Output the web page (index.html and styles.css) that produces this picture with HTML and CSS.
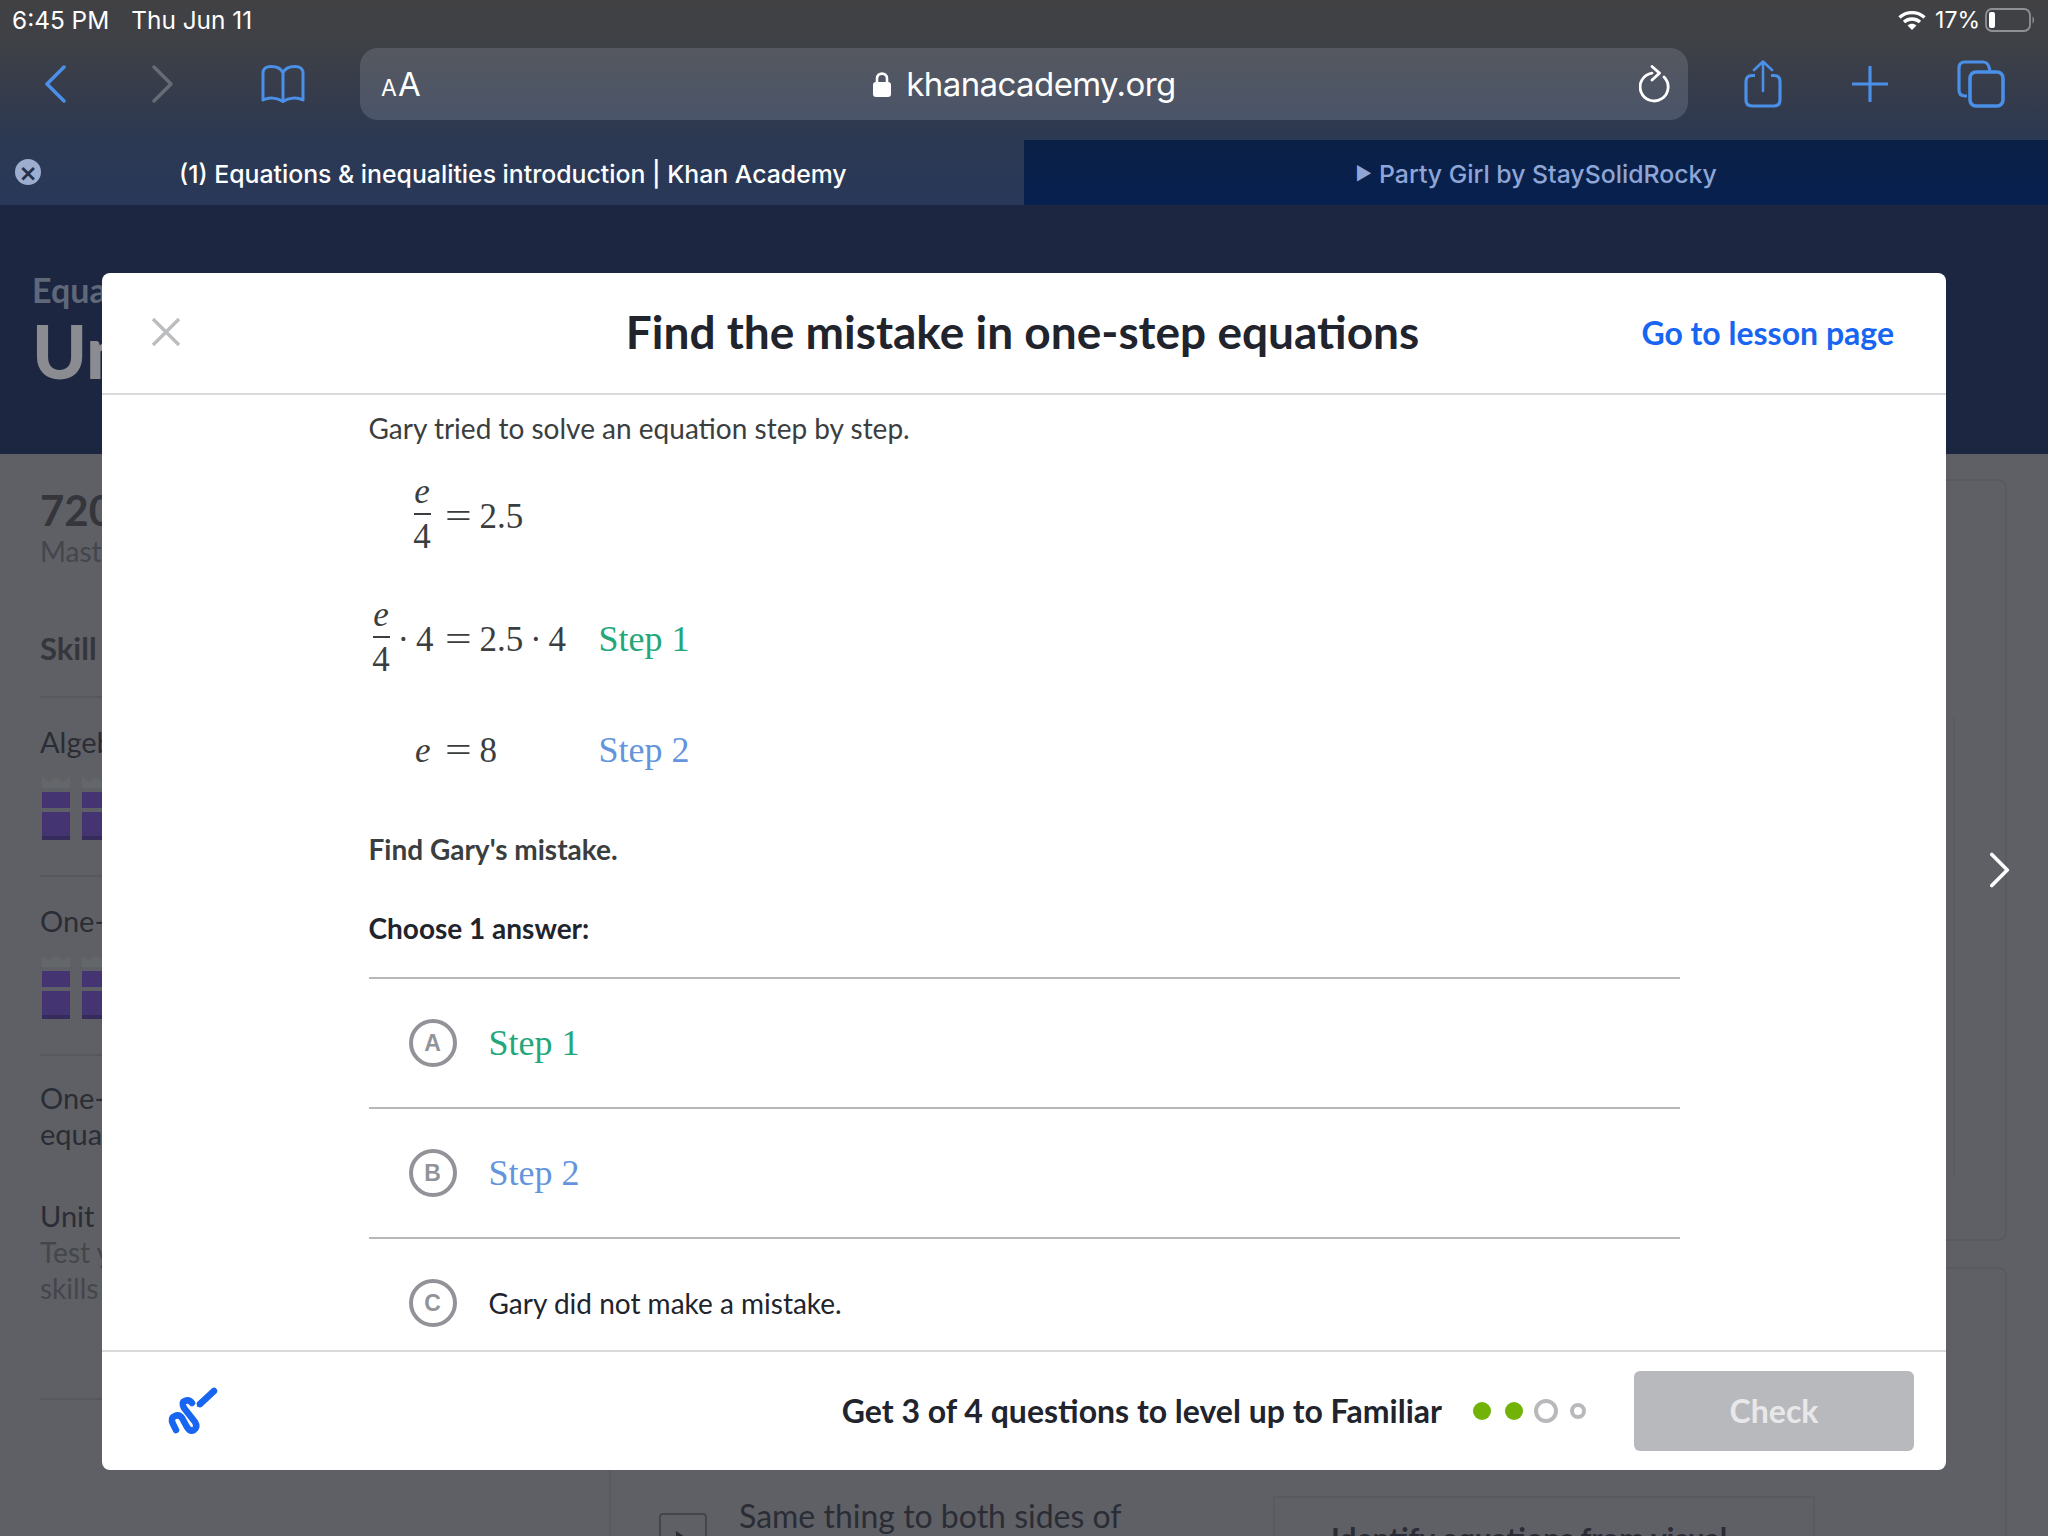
FILE: index.html
```html
<!DOCTYPE html>
<html lang="en">
<head>
<meta charset="utf-8">
<title>Find the mistake in one-step equations</title>
<link rel="stylesheet" href="styles.css">
</head>
<body>
<div class="screen">
  <header class="chrome">
    <div class="status">
      <div class="status-left"><span>6:45 PM</span><span>Thu Jun 11</span></div>
      <div class="status-right">
        <svg class="wifi" viewBox="0 0 28 20"><path d="M1.5 7.5C8.5 1 19.500 1 26.500 7.500" fill="none" stroke="#fff" stroke-width="3.400"/><path d="M6 12C10.500 8 17.500 8 22 12" fill="none" stroke="#fff" stroke-width="3.400"/><path d="M14 20L9.500 15.500C12 13.300 16 13.300 18.500 15.500Z" fill="#fff"/></svg>
        <span class="pct">17%</span>
        <svg class="battery" viewBox="0 0 50 24"><rect x="1" y="1" width="44" height="22" rx="6" fill="none" stroke="#8f9094" stroke-width="1.800"/><rect x="4" y="4" width="6" height="16" rx="2" fill="#fff"/><path d="M47.500 8.500C49.500 9.500 49.500 14.500 47.500 15.500Z" fill="#8f9094"/></svg>
      </div>
    </div>
    <div class="toolbar">
      <svg class="ic-back" viewBox="0 0 22 38"><path d="M20 2L3 19L20 36" fill="none" stroke="#4a8fe8" stroke-width="3.500" stroke-linecap="round" stroke-linejoin="round"/></svg>
      <svg class="ic-forward" viewBox="0 0 22 38"><path d="M2 2L19 19L2 36" fill="none" stroke="#666b75" stroke-width="3.500" stroke-linecap="round" stroke-linejoin="round"/></svg>
      <svg class="ic-book" viewBox="0 0 44 38"><path d="M22 8C20 3 15 1.500 10 1.500C5 1.500 2 4 2 8V35C8 32 16 32.500 22 36.500C28 32.500 36 32 42 35V8C42 4 39 1.500 34 1.500C29 1.500 24 3 22 8ZM22 8V36" fill="none" stroke="#4a8fe8" stroke-width="3" stroke-linejoin="round"/></svg>
      <div class="address">
        <div class="aa"><span class="aa-small">A</span><span class="aa-big">A</span></div>
        <div class="url">
          <svg class="lock" viewBox="0 0 20 26"><path d="M5 12V7.500C5 1 15 1 15 7.500V12" fill="none" stroke="#fff" stroke-width="2.600"/><rect x="1" y="11" width="18" height="15" rx="3" fill="#fff"/></svg>
          <span>khanacademy.org</span>
        </div>
        <svg class="reload" viewBox="0 0 31 38"><path d="M13 8.100A14 14 0 1 0 25 12" fill="none" stroke="#fff" stroke-width="2.800" stroke-linecap="round"/><path d="M13 1.500L20.500 8.100L13 15" fill="none" stroke="#fff" stroke-width="2.800" stroke-linecap="round" stroke-linejoin="round"/></svg>
      </div>
      <svg class="ic-share" viewBox="0 0 38 48"><path d="M11 15.500H8C4 15.500 2 17.500 2 21.500V40C2 44 4 46 8 46H30C34 46 36 44 36 40V21.500C36 17.500 34 15.500 30 15.500H27" fill="none" stroke="#4a8fe8" stroke-width="3.200"/><path d="M19 31V1.500M10 10L19 1.500L28 10" fill="none" stroke="#4a8fe8" stroke-width="2.600" stroke-linecap="round" stroke-linejoin="round"/></svg>
      <svg class="ic-plus" viewBox="0 0 36 36"><path d="M18 1V35M1 18H35" fill="none" stroke="#4a8fe8" stroke-width="3.200" stroke-linecap="round"/></svg>
      <svg class="ic-tabs" viewBox="0 0 48 48"><path d="M10 36H8C4 36 2 34 2 30V8C2 4 4 2 8 2H26C30 2 32 4 33 11" fill="none" stroke="#4a8fe8" stroke-width="3.200"/><rect x="13" y="12" width="33" height="34" rx="6" fill="none" stroke="#4a8fe8" stroke-width="3.600"/></svg>
    </div>
    <div class="tabs">
      <div class="tab tab-active">
        <span class="tab-close">×</span>
        <span class="tab-title">(1) Equations &amp; inequalities introduction | Khan Academy</span>
      </div>
      <div class="tab tab-other"><span class="tab-play">▶</span><span>Party Girl by StaySolidRocky</span></div>
    </div>
  </header>

  <div class="hero">
    <div class="crumb">Equations</div>
    <div class="hero-title">Unit</div>
  </div>

  <div class="content">
    <aside class="side">
      <div class="points">720</div>
      <div class="muted">Mastery</div>
      <div class="skill-head">Skill summary</div>
      <div class="skill">
        <div class="skill-name">Algebra</div>
        <div class="bars">
          <div class="bar"><i class="crown"></i><i class="seg1"></i><i class="seg2"></i></div>
          <div class="bar"><i class="crown"></i><i class="seg1"></i><i class="seg2"></i></div>
        </div>
      </div>
      <div class="skill">
        <div class="skill-name">One-step</div>
        <div class="bars">
          <div class="bar"><i class="crown"></i><i class="seg1"></i><i class="seg2"></i></div>
          <div class="bar"><i class="crown"></i><i class="seg1"></i><i class="seg2"></i></div>
        </div>
      </div>
      <div class="skill-last">
        <div class="skill-name">One-step<br>equations</div>
      </div>
      <div class="unit">
        <div class="skill-name">Unit test</div>
        <div class="muted">Test your<br>skills</div>
      </div>
    </aside>
    <main class="main">
      <section class="card card-top"><div class="inner-top"></div></section>
      <section class="card card-bottom">
        <div class="lesson">
          <span class="play-box"><svg viewBox="0 0 20 24"><path d="M3 2L18 12L3 22Z" fill="#2b2e36"/></svg></span>
          <span>Same thing to both sides of</span>
        </div>
        <div class="panel"><b>Identify equations from visual</b></div>
      </section>
    </main>
  </div>

  <svg class="next" viewBox="0 0 22 38"><path d="M2 2L19 19L2 36" fill="none" stroke="#fff" stroke-width="4" stroke-linecap="round" stroke-linejoin="round"/></svg>

  <div class="modal">
    <div class="modal-head">
      <svg class="close" viewBox="0 0 30 30"><path d="M2 2L28 28M28 2L2 28" fill="none" stroke="#bcbdbf" stroke-width="3.400"/></svg>
      <h1>Find the mistake in one-step equations</h1>
      <a class="lesson-link">Go to lesson page</a>
    </div>
    <div class="modal-body">
      <div class="question">
        <p class="intro">Gary tried to solve an equation step by step.</p>
        <div class="eqs">
          <div class="lhs"><span class="frac"><i>e</i><span>4</span></span></div>
          <div class="rhs"><span class="eq-sign">=</span>2.5</div>
          <div></div>
          <div class="lhs"><span class="frac"><i>e</i><span>4</span></span><span class="dot-four">· 4</span></div>
          <div class="rhs"><span class="eq-sign">=</span>2.5 · 4</div>
          <div class="step green">Step 1</div>
          <div class="lhs"><i>e</i></div>
          <div class="rhs"><span class="eq-sign">=</span>8</div>
          <div class="step blue">Step 2</div>
        </div>
        <p class="find">Find Gary's mistake.</p>
        <p class="choose">Choose 1 answer:</p>
        <div class="choice"><span class="letter">A</span><span class="step green">Step 1</span></div>
        <div class="choice"><span class="letter">B</span><span class="step blue">Step 2</span></div>
        <div class="choice"><span class="letter">C</span><span class="plain">Gary did not make a mistake.</span></div>
      </div>
    </div>
    <div class="modal-foot">
      <svg class="scratch" viewBox="160 1380 70 65"><path d="M176 1430L173 1424Q170 1418 175 1416Q179 1414 182 1418L187 1427Q190 1432 194 1430Q198 1427 195 1422L184 1408Q181 1402 185 1401Q189 1399 192 1403" fill="none" stroke="#1865f2" stroke-width="6.500" stroke-linecap="round"/><path d="M200 1404L214 1391" fill="none" stroke="#1865f2" stroke-width="6.500" stroke-linecap="round"/><path d="M197 1407L198 1401L203 1406Z" fill="#1865f2"/></svg>
      <div class="goal">Get 3 of 4 questions to level up to Familiar</div>
      <div class="dots"><i class="d-green"></i><i class="d-green"></i><i class="d-ring"></i><i class="d-small"></i></div>
      <button class="check">Check</button>
    </div>
  </div>
</div>
</body>
</html>
```
FILE: styles.css
```css
* { box-sizing: border-box; }
html, body { margin: 0; padding: 0; }
body { width: 2048px; height: 1536px; overflow: hidden; background: #5f6065; font-family: "Lato", sans-serif; }
.screen { position: relative; width: 2048px; height: 1536px; overflow: hidden; display: flex; flex-direction: column; }

/* browser chrome */
.chrome { height: 205px; flex: none; background: linear-gradient(180deg, #414144 0, #3f4146 40px, #343b4c 100px, #2b3953 140px, #293859 205px); color: #fff; font-family: "Inter", "Liberation Sans", sans-serif; }
.status { height: 40px; display: flex; justify-content: space-between; align-items: center; padding: 0 13px 0 12px; font-size: 24.400px; }
.status-left { display: flex; gap: 22px; }
.status-right { display: flex; align-items: center; }
.wifi { width: 28px; height: 20px; }
.pct { margin-left: 9px; font-size: 23px; }
.battery { width: 50px; height: 24px; margin-left: 5px; }
.toolbar { height: 88px; padding: 0 0 0 44px; display: flex; align-items: center; }
.ic-back, .ic-forward { width: 22px; height: 38px; flex: none; }
.ic-forward { margin-left: 86px; }
.ic-book { width: 44px; height: 38px; margin-left: 87px; flex: none; }
.address { width: 1328px; height: 72px; margin-left: 55px; flex: none; border-radius: 18px; background: linear-gradient(180deg, #55585f, #4a5469); display: grid; grid-template-columns: 1fr auto 1fr; align-items: center; padding: 0 18px 0 21px; }
.aa { display: flex; align-items: baseline; }
.aa-small { font-size: 23px; }
.aa-big { font-size: 33px; margin-left: 1px; }
.url { display: flex; align-items: center; gap: 14px; margin-left: -3px; font-size: 33px; letter-spacing: -0.600px; }
.lock { width: 20px; height: 26px; }
.reload { width: 31px; height: 38px; justify-self: end; }
.ic-share { width: 38px; height: 48px; margin-left: 56px; flex: none; }
.ic-plus { width: 36px; height: 36px; margin-left: 70px; flex: none; }
.ic-tabs { width: 48px; height: 48px; margin-left: 69px; flex: none; }
.tabs { height: 65px; margin-top: 12px; display: flex; font-size: 24.800px; font-weight: 500; }
.tab { width: 1024px; display: flex; align-items: center; padding-top: 2px; }
.tab-active { padding-left: 15px; }
.tab-close { width: 26px; height: 26px; margin-top: -3px; border-radius: 50%; background: #9dadd0; color: #233048; display: flex; align-items: center; justify-content: center; font-size: 28px; line-height: 1; }
.tab-title { margin-left: 138px; }
.tab-other { justify-content: center; background: linear-gradient(180deg, #0b2046, #06204f); color: #8ea5d6; gap: 7px; }
.tab-play { font-size: 18px; }

/* page behind the dialog */
.hero { height: 249px; flex: none; background: #1c2640; color: #5f6879; padding: 67px 0 0 32px; }
.crumb { font-size: 34px; font-weight: 700; line-height: 36px; }
.hero-title { font-size: 74px; font-weight: 900; line-height: 80px; color: #8a8c92; margin-top: 3px; }
.content { flex: 1; display: flex; min-height: 0; }
.side { width: 609px; flex: none; padding: 34px 0 0 40px; color: #2a2d35; }
.points { font-size: 42px; font-weight: 700; line-height: 44px; color: #34363c; }
.muted { font-size: 28px; line-height: 36px; color: #44464c; }
.side > .muted { padding-top: 1px; margin-bottom: -1px; }
.skill-head { font-size: 31px; font-weight: 700; line-height: 40px; margin-top: 60px; padding-bottom: 28px; border-bottom: 2px solid #56585d; color: #34363c; white-space: nowrap; }
.skill { height: 179px; padding-top: 26px; border-bottom: 2px solid #56585d; }
.skill-name { font-size: 29px; line-height: 36px; }
.bars { display: flex; gap: 12px; margin-top: 17px; padding-left: 2px; }
.bar { width: 28px; display: flex; flex-direction: column; }
.bar i { display: block; }
.crown { height: 11px; margin-bottom: 4px; background: #64676a; clip-path: polygon(0 0, 25% 45%, 50% 0, 75% 45%, 100% 0, 100% 100%, 0 100%); }
.seg1 { height: 16px; background: #453472; }
.seg2 { height: 28px; margin-top: 4px; background: #453472; border-bottom: 4px solid #352c5c; }
.skill-last { padding-top: 24px; height: 140px; }
.unit { height: 202px; margin-top: 2px; border-bottom: 2px solid #56585d; }
.main { flex: 1; padding: 25px 41px 0 0; display: flex; flex-direction: column; gap: 26px; min-width: 0; }
.card { border: 2px solid #585a5f; border-radius: 8px; }
.card-top { height: 762px; flex: none; display: flex; justify-content: flex-end; padding: 236px 50px 0 0; }
.inner-top { width: 400px; height: 460px; border-right: 2px solid #595c60; }
.card-bottom { flex: 1; display: flex; padding: 227px 190px 0 48px; justify-content: space-between; align-items: flex-start; }
.lesson { display: flex; gap: 32px; font-size: 32px; line-height: 40px; color: #2a2d35; }
.play-box { width: 48px; height: 60px; border: 2px solid #44464c; border-radius: 4px; padding: 14px 12px 0; margin-top: 17px; flex: none; }
.play-box svg { width: 20px; height: 24px; display: block; }
.panel { width: 542px; height: 80px; border: 2px solid #585a5f; border-bottom: 0; padding: 22px 0 0 56px; font-size: 30px; color: #2a2d35; white-space: nowrap; }
.next { position: absolute; left: 1990px; top: 852px; width: 20px; height: 36px; }

/* dialog */
.modal { position: absolute; left: 102px; top: 273px; width: 1844px; height: 1197px; background: #fff; border-radius: 8px; display: flex; flex-direction: column; overflow: hidden; }
.modal-head { height: 122px; flex: none; border-bottom: 2px solid #d9d9db; display: grid; grid-template-columns: 1fr auto 1fr; align-items: center; padding: 0 52px 2px 49px; }
.close { width: 30px; height: 30px; }
h1 { margin: 0; font-size: 46px; font-weight: 700; color: #21242c; line-height: 1.2; }
.lesson-link { justify-self: end; font-size: 32px; font-weight: 700; color: #1865f2; }
.modal-body { flex: 1; min-height: 0; overflow: hidden; }
.question { width: 1311px; margin: 0 auto; padding-top: 13px; color: #3b3e40; font-size: 28px; line-height: 40px; }
.question p { margin: 0; }
.eqs { display: grid; grid-template-columns: 64px 166px 1fr; grid-template-rows: 100px 104px 76px; row-gap: 21px; align-items: center; margin-top: 19px; font-family: "Liberation Serif", serif; font-size: 35px; }
.eqs .step { margin-top: -2px; }
.lhs { display: flex; align-items: center; justify-content: flex-end; padding-right: 2px; white-space: nowrap; }
.eqs > .rhs { padding-left: 12px; white-space: nowrap; word-spacing: -2px; }
.eq-sign { display: inline-block; width: 35px; transform: scaleX(1.35); transform-origin: left center; }
.frac { display: inline-flex; flex-direction: column; align-items: center; width: 17px; }
.frac i { border-bottom: 2px solid #3b3e40; width: 100%; text-align: center; padding-bottom: 4px; line-height: 34px; }
.frac span { line-height: 44px; }
.dot-four { margin-left: 8px; margin-right: -3px; word-spacing: -2px; }
.step { font-family: "Liberation Serif", serif; font-size: 36px; }
.green { color: #23a77a; }
.blue { color: #6495dc; }
.find { margin-top: 40px !important; font-weight: 700; }
.choose { margin-top: 39px !important; font-weight: 700; color: #21242c; padding-bottom: 29px; border-bottom: 2px solid #b8b8ba; }
.choice { height: 130px; flex: none; display: flex; align-items: center; gap: 32px; padding-left: 40px; border-bottom: 2px solid #b8b8ba; }
.letter { width: 48px; height: 48px; border: 4px solid #929399; border-radius: 50%; display: flex; align-items: center; justify-content: center; font-family: "Liberation Sans", sans-serif; font-weight: 700; font-size: 23px; color: #929399; flex: none; }
.plain { color: #21242c; }
.modal-foot { height: 120px; flex: none; border-top: 2px solid #d9d9db; display: flex; align-items: center; padding: 0 32px 0 58px; }
.scratch { width: 70px; height: 65px; flex: none; margin-top: 2px; }
.goal { margin-left: auto; margin-top: -2px; font-size: 32px; font-weight: 700; color: #21242c; }
.dots { display: grid; grid-template-columns: repeat(4, 32px); justify-items: center; align-items: center; margin: 0 40px 0 24px; }
.dots i { display: block; border-radius: 50%; }
.d-green { width: 18px; height: 18px; background: #71b307; }
.d-ring { width: 24px; height: 24px; border: 4px solid #b8b9bc; }
.d-small { width: 16px; height: 16px; border: 4px solid #b8b9bc; }
.check { width: 280px; height: 80px; border: 0; border-radius: 6px; padding: 0 0 2px; background: #b8b9bc; color: #e8e8ea; font-family: "Lato", sans-serif; font-size: 32px; font-weight: 700; }
```
